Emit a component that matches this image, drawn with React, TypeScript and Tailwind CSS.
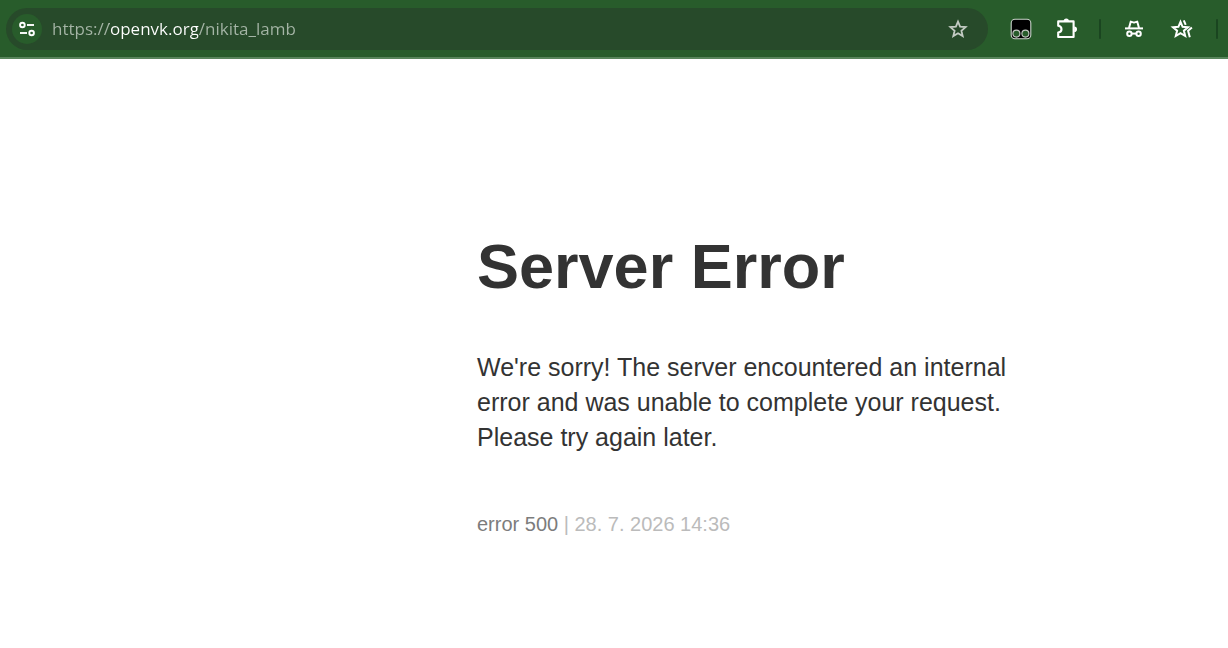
import type { ReactNode } from "react";

function ToolbarButton({ label, children }: { label: string; children: ReactNode }) {
  return (
    <button type="button" aria-label={label} className="flex size-6 shrink-0 items-center justify-center text-white">
      {children}
    </button>
  );
}

function Divider() {
  return <span aria-hidden="true" className="h-5 w-[2px] shrink-0 rounded-full bg-[#1a4520]" />;
}

function SiteSettingsIcon() {
  return (
    <svg width="18" height="18" viewBox="0 0 18 18" fill="none" stroke="currentColor" strokeWidth="1.9" aria-hidden="true">
      <circle cx="4.4" cy="5" r="2.3" />
      <path d="M9 5H16" />
      <circle cx="13.6" cy="13" r="2.3" />
      <path d="M2 13H9" />
    </svg>
  );
}

function StarIcon() {
  return (
    <svg width="24" height="24" viewBox="0 0 24 24" fill="none" stroke="currentColor" strokeWidth="1.8" aria-hidden="true">
      <path d="M12 4.6L14.1 9.7L19.6 10.1L15.4 13.7L16.7 19.1L12 16.2L7.3 19.1L8.6 13.7L4.4 10.1L9.9 9.7Z" />
    </svg>
  );
}

function MonkeyIcon() {
  return (
    <svg width="22" height="22" viewBox="0 0 22 22" aria-hidden="true">
      <rect x="1.2" y="1.2" width="19.6" height="19.6" rx="3.8" fill="#000" stroke="#c9d3ca" strokeWidth="1.1" />
      <circle cx="6.4" cy="15.6" r="3.5" fill="#285c2b" stroke="#c4c9c4" strokeWidth="1.1" />
      <circle cx="15.4" cy="15.6" r="3.5" fill="#285c2b" stroke="#c4c9c4" strokeWidth="1.1" />
    </svg>
  );
}

function PuzzleIcon() {
  return (
    <svg width="24" height="24" viewBox="0 0 24 24" aria-hidden="true">
      <path
        d="M3.2 4.4H18.6V20H3.2V15.6C7.6 14.8 7.6 9.6 3.2 8.8Z"
        fill="none"
        stroke="currentColor"
        strokeWidth="2.1"
        strokeLinejoin="round"
      />
      <path d="M8.7 4A2.6 2.6 0 0 1 13.9 4ZM19.2 9.4A2.8 2.8 0 0 1 19.2 15Z" fill="currentColor" />
    </svg>
  );
}

function IncognitoIcon() {
  return (
    <svg width="24" height="24" viewBox="0 0 24 24" fill="none" stroke="currentColor" strokeWidth="2" aria-hidden="true">
      <path d="M3 11.4H21" />
      <path d="M7 11L8.8 4.6L12 5.6L15.2 4.6L17 11" strokeLinejoin="round" />
      <circle cx="7.4" cy="16.8" r="2.2" />
      <circle cx="16.6" cy="16.8" r="2.2" />
      <path d="M9.6 16.6H14.4" />
    </svg>
  );
}

function BookmarksIcon() {
  return (
    <svg width="24" height="24" viewBox="0 0 24 24" fill="none" stroke="currentColor" strokeWidth="2" aria-hidden="true">
      <path d="M10.5 4.8L12.6 9.8L18 10.2L13.9 13.7L15.2 19L10.5 16.2L5.8 19L7.1 13.7L3 10.2L8.4 9.8Z" />
      <path d="M13.8 3.4L15.7 7.8" />
      <path d="M21.9 10.4L18.1 13.8L19.8 20.2" />
    </svg>
  );
}

function Toolbar() {
  return (
    <header className="flex h-[59px] items-center border-b-2 border-[#58855b] bg-[#285c2b] pl-1.5 pr-2.5">
      <div className="flex h-[42px] min-w-0 flex-1 items-center rounded-full bg-[#274a2a] pl-1.5 pr-[18px]">
        <button
          type="button"
          aria-label="View site information"
          className="flex size-[30px] shrink-0 items-center justify-center rounded-full bg-[#285c2b] text-white"
        >
          <SiteSettingsIcon />
        </button>
        <input
          type="text"
          aria-label="Address and search bar"
          defaultValue="https://openvk.org/nikita_lamb"
          spellCheck={false}
          className="ml-2.5 h-8 min-w-0 flex-1 bg-[linear-gradient(to_right,#a5b5a6_57px,#ffffff_57px,#ffffff_146px,#a5b5a6_146px)] bg-clip-text font-['Open_Sans',sans-serif] text-[17px] text-transparent caret-white outline-none"
        />
        <button
          type="button"
          aria-label="Bookmark this page"
          className="flex size-6 shrink-0 items-center justify-center text-[#c3cbc3]"
        >
          <StarIcon />
        </button>
      </div>
      <div className="ml-[21px] flex items-center">
        <div className="flex items-center gap-[22px]">
          <ToolbarButton label="Userscript manager"><MonkeyIcon /></ToolbarButton>
          <ToolbarButton label="Extensions"><PuzzleIcon /></ToolbarButton>
        </div>
        <div className="ml-5 flex items-center">
          <Divider />
          <div className="ml-[21px] mr-[22px] flex items-center gap-6">
            <ToolbarButton label="Incognito"><IncognitoIcon /></ToolbarButton>
            <ToolbarButton label="Bookmarks"><BookmarksIcon /></ToolbarButton>
          </div>
          <Divider />
        </div>
      </div>
    </header>
  );
}

export default function App() {
  return (
    <div className="min-h-screen bg-white font-['Liberation_Sans',Arial,sans-serif] text-[#333333]">
      <Toolbar />
      <main className="ml-[477px] max-w-[560px] pt-[160px]">
        <h1 className="text-[63px] font-bold leading-[94px]">Server Error</h1>
        <p className="mt-[37px] text-[25px] leading-[35px]">
          We're sorry! The server encountered an internal error and was unable to complete your request. Please try again later.
        </p>
        <p className="mt-[51px] text-xl leading-9 text-[#bbbbbb]">
          <span className="text-[#7c7c7c]">error 500</span> | 28. 7. 2026 14:36
        </p>
      </main>
    </div>
  );
}
